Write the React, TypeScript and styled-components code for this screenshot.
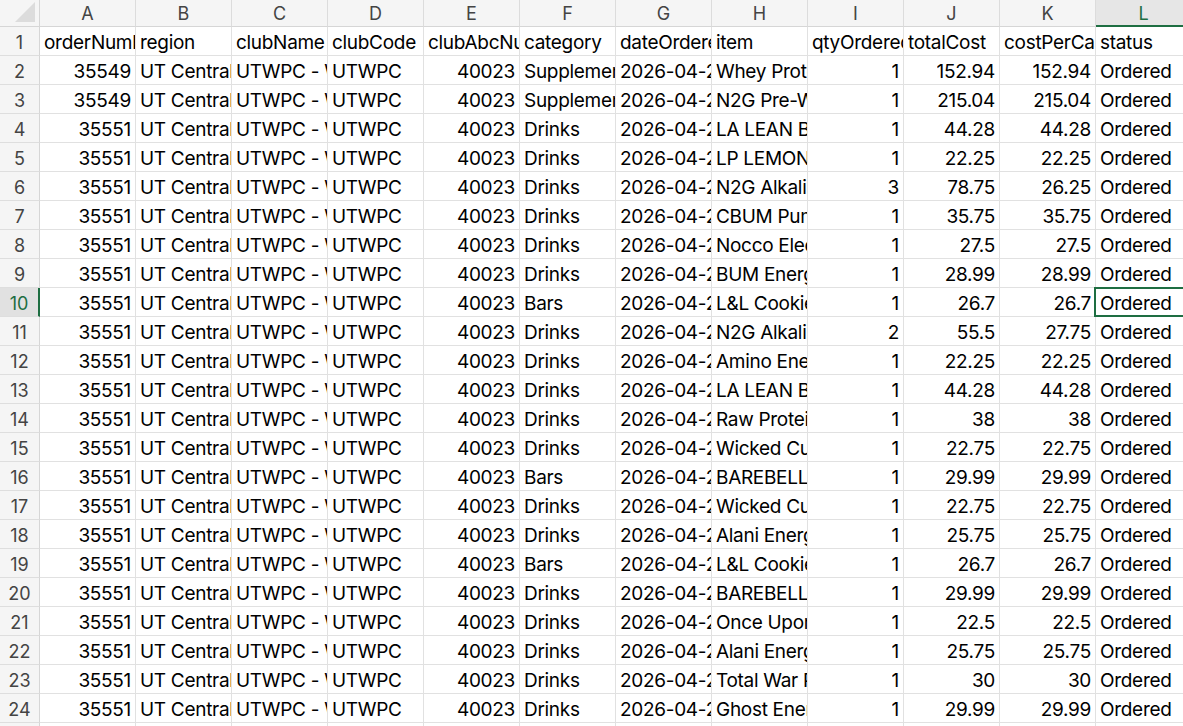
import React from 'react'
import styled, { createGlobalStyle, css } from 'styled-components'

const GREEN = '#1e6e42'
const GRID = '#e1e1e1'

const Global = createGlobalStyle`
  html, body {
    margin: 0;
    padding: 0;
    background: #fff;
    overflow: hidden;
  }
  body {
    font-family: Inter, "Liberation Sans", sans-serif;
  }
`

const Sheet = styled.div`
  display: grid;
  grid-template-columns: 40px repeat(12, 96px);
  grid-template-rows: 27px repeat(25, 29px);
  width: max-content;
  font-size: 19px;
  color: #000;
`

const Corner = styled.div`
  position: relative;
  background: #f5f5f5;
  border-right: 1px solid #d6d6d6;
  border-bottom: 1px solid #d6d6d6;

  &::after {
    content: '';
    position: absolute;
    right: 4px;
    bottom: 4px;
    border-style: solid;
    border-width: 0 0 20px 20px;
    border-color: transparent transparent #dcdcdc transparent;
  }
`

const ColHead = styled.div<{ $active?: boolean }>`
  display: flex;
  align-items: center;
  justify-content: center;
  background: #f5f5f5;
  color: #444;
  border-right: 1px solid #dcdcdc;
  border-bottom: 1px solid #d6d6d6;
  font-size: 18px;
  ${p => p.$active && css`
    background: #e6e6e6;
    color: ${GREEN};
    border-bottom: 2px solid ${GREEN};
    padding-top: 1px;
  `}
`

const RowHead = styled.div<{ $active?: boolean }>`
  display: flex;
  align-items: flex-end;
  justify-content: center;
  padding-bottom: 2px;
  box-sizing: border-box;
  background: #f5f5f5;
  color: #444;
  font-size: 18px;
  border-right: 1px solid #d6d6d6;
  border-bottom: 1px solid #dedede;
  ${p => p.$active && css`
    background: #e1e1e1;
    color: ${GREEN};
    border-right: 2px solid ${GREEN};
  `}
`

// text cells clip right at the gridline, numbers keep a small gap before it
const Cell = styled.div<{ $num?: boolean; $selected?: boolean }>`
  position: relative;
  display: flex;
  align-items: flex-end;
  justify-content: ${p => (p.$num ? 'flex-end' : 'flex-start')};
  padding: 0 ${p => (p.$num ? '4px' : '0')} 1px 4px;
  box-sizing: border-box;
  border-right: 1px solid ${GRID};
  border-bottom: 1px solid ${GRID};
  letter-spacing: -0.3px;
  white-space: nowrap;
  overflow: hidden;
  ${p => p.$selected && css`
    overflow: visible;
    &::after {
      content: '';
      position: absolute;
      top: -1px;
      left: -2px;
      right: -1px;
      bottom: -1px;
      border: 2px solid ${GREEN};
      pointer-events: none;
    }
  `}
`

const Clip = styled.span`
  display: block;
  overflow: hidden;
  white-space: nowrap;
`

const letters = ['A', 'B', 'C', 'D', 'E', 'F', 'G', 'H', 'I', 'J', 'K', 'L']

const headers = [
  'orderNumber', 'region', 'clubName', 'clubCode', 'clubAbcNumber', 'category',
  'dateOrdered', 'item', 'qtyOrdered', 'totalCost', 'costPerCase', 'status',
]

type Order = [number, string, string, number, number, number]

// orderNumber, category, item, qty, totalCost, costPerCase
const orders: Order[] = [
  [35549, 'Supplements', 'Whey Protein Isolate', 1, 152.94, 152.94],
  [35549, 'Supplements', 'N2G Pre-Workout', 1, 215.04, 215.04],
  [35551, 'Drinks', 'LA LEAN BODY RTD', 1, 44.28, 44.28],
  [35551, 'Drinks', 'LP LEMONADE', 1, 22.25, 22.25],
  [35551, 'Drinks', 'N2G Alkaline Water', 3, 78.75, 26.25],
  [35551, 'Drinks', 'CBUM Pump', 1, 35.75, 35.75],
  [35551, 'Drinks', 'Nocco Electrolyte', 1, 27.5, 27.5],
  [35551, 'Drinks', 'BUM Energy', 1, 28.99, 28.99],
  [35551, 'Bars', 'L&L Cookie', 1, 26.7, 26.7],
  [35551, 'Drinks', 'N2G Alkaline Water', 2, 55.5, 27.75],
  [35551, 'Drinks', 'Amino Energy', 1, 22.25, 22.25],
  [35551, 'Drinks', 'LA LEAN BODY RTD', 1, 44.28, 44.28],
  [35551, 'Drinks', 'Raw Protein Shake', 1, 38, 38],
  [35551, 'Drinks', 'Wicked Cup', 1, 22.75, 22.75],
  [35551, 'Bars', 'BAREBELLS Bar', 1, 29.99, 29.99],
  [35551, 'Drinks', 'Wicked Cup', 1, 22.75, 22.75],
  [35551, 'Drinks', 'Alani Energy', 1, 25.75, 25.75],
  [35551, 'Bars', 'L&L Cookie', 1, 26.7, 26.7],
  [35551, 'Drinks', 'BAREBELLS Protein Shake', 1, 29.99, 29.99],
  [35551, 'Drinks', 'Once Upon a Coconut', 1, 22.5, 22.5],
  [35551, 'Drinks', 'Alani Energy', 1, 25.75, 25.75],
  [35551, 'Drinks', 'Total War Pre-Workout', 1, 30, 30],
  [35551, 'Drinks', 'Ghost Energy', 1, 29.99, 29.99],
]

const SEL_ROW = 10
const SEL_COL = 11

export default function App() {
  const rows: (string | number)[][] = [
    headers,
    ...orders.map(([no, cat, item, qty, total, per]) => [
      no, 'UT Central', 'UTWPC - West Point', 'UTWPC', 40023, cat,
      '2026-04-21', item, qty, total, per, 'Ordered',
    ]),
    Array(12).fill(''),
  ]

  return (
    <>
      <Global />
      <Sheet>
        <Corner />
        {letters.map((l, i) => (
          <ColHead key={l} $active={i === SEL_COL}>{l}</ColHead>
        ))}
        {rows.map((row, r) => (
          <React.Fragment key={r}>
            <RowHead $active={r + 1 === SEL_ROW}>{r + 1}</RowHead>
            {row.map((v, c) => (
              <Cell
                key={c}
                $num={typeof v === 'number'}
                $selected={r + 1 === SEL_ROW && c === SEL_COL}
              >
                <Clip>{v}</Clip>
              </Cell>
            ))}
          </React.Fragment>
        ))}
      </Sheet>
    </>
  )
}
